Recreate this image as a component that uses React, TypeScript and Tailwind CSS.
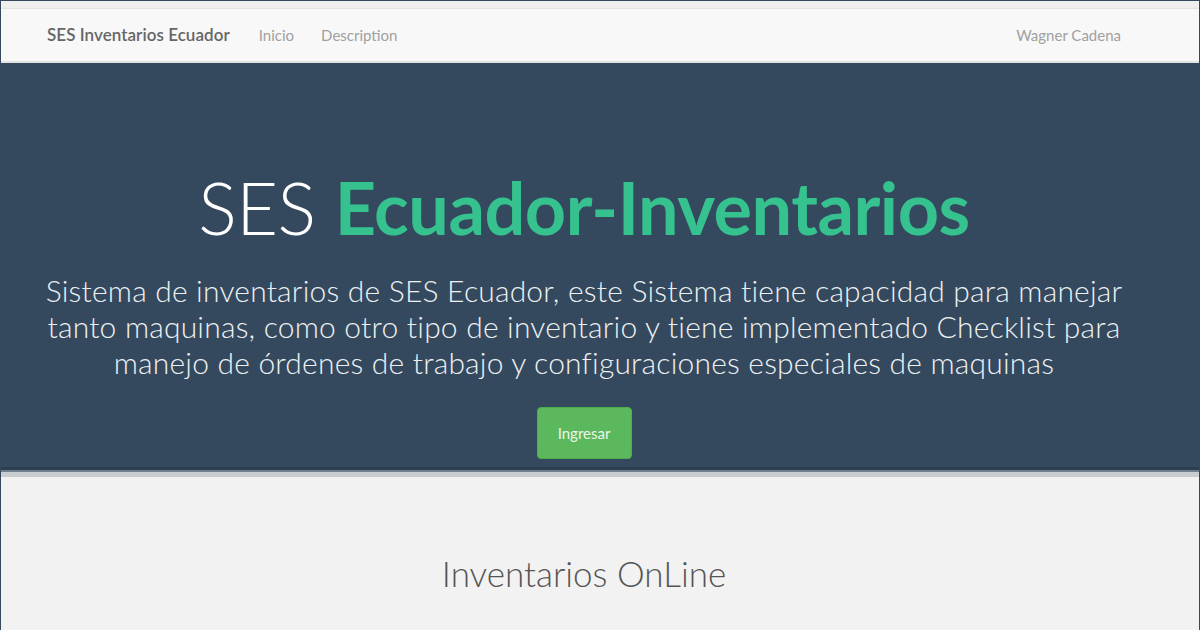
import React from "react";

const font = { fontFamily: "Lato, 'Open Sans', sans-serif" };

export default function App() {
  return (
    <div
      className="flex h-[630px] w-[1200px] flex-col overflow-hidden border-x border-t border-[#34495e] bg-[#f2f2f2]"
      style={font}
    >
      {/* strip of a cut-off image above the navbar */}
      <div className="h-[8px] border-b border-[#e4e4e4] bg-[#efefef]" />

      {/* Navbar */}
      <nav className="flex h-[54px] items-center border-b-2 border-[#e2e2e2] bg-[#f8f8f8] px-[46px] text-[15px]">
        <span className="mr-[29px] text-[17px] font-semibold tracking-[0.05px] text-[#666]">
          SES Inventarios Ecuador
        </span>
        <a href="#" className="mr-[27px] text-[#a0a0a0]">
          Inicio
        </a>
        <a href="#" className="text-[#a0a0a0]">
          Description
        </a>
        <span className="ml-auto mr-[32px] text-[#a0a0a0]">Wagner Cadena</span>
      </nav>

      {/* Hero */}
      <header className="flex h-[404px] flex-col items-center bg-[#34495e] pt-[108px] pr-[32px] text-center">
        <h1 className="text-[72px] leading-none tracking-[-0.5px] text-white">
          <span className="font-light">SES </span>
          <span className="font-bold text-[#35c28f]">Ecuador-Inventarios</span>
        </h1>
        <p className="mt-[29px] max-w-[1100px] text-[30px] leading-[36px] font-light tracking-[0.2px] text-[#eef1f3]">
          Sistema de inventarios de SES Ecuador, este Sistema tiene capacidad para manejar tanto
          maquinas, como otro tipo de inventario y tiene implementado Checklist para manejo de
          órdenes de trabajo y configuraciones especiales de maquinas
        </p>
        <button className="mt-[27px] h-[52px] w-[95px] rounded-[4px] border border-[#4cae4c] bg-[#5cb85c] text-[15px] text-[#eaf6ea]">
          Ingresar
        </button>
      </header>

      {/* shadow below hero */}
      <div className="h-[3px] bg-[#2c3e50]" />
      <div className="h-[2px] bg-[#6e7e8e]" />
      <div className="h-[5px] bg-[#c9cdd1]" />

      {/* Section */}
      <section className="flex flex-1 justify-center pt-[79px] pr-[32px]">
        <h2 className="text-[35px] leading-none font-light text-[#555]">Inventarios OnLine</h2>
      </section>
    </div>
  );
}
